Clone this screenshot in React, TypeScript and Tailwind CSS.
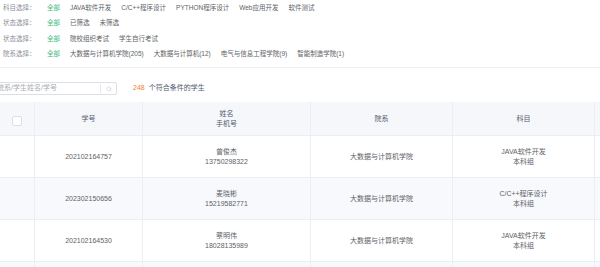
import { Search } from 'lucide-react';

const filters = [
    { label: '科目选择：', items: ['JAVA软件开发', 'C/C++程序设计', 'PYTHON程序设计', 'Web应用开发', '软件测试'] },
    { label: '状态选择：', items: ['已筛选', '未筛选'] },
    { label: '状态选择：', items: ['院校组织考试', '学生自行考试'] },
    { label: '院系选择：', items: ['大数据与计算机学院(205)', '大数据与计算机(12)', '电气与信息工程学院(9)', '智能制造学院(1)'] },
];

const rows = [
    { id: '202102164757', name: '曾俊杰', phone: '13750298322', dept: '大数据与计算机学院', subject: 'JAVA软件开发', group: '本科组' },
    { id: '202302150656', name: '麦晓彬', phone: '15219582771', dept: '大数据与计算机学院', subject: 'C/C++程序设计', group: '本科组' },
    { id: '202102164530', name: '蔡明伟', phone: '18028135989', dept: '大数据与计算机学院', subject: 'JAVA软件开发', group: '本科组' },
];

const cols = 'grid grid-cols-[35px_108px_168px_142px_142px_140px]';
const cell = 'flex flex-col items-center justify-center border-r border-b border-[#ebeef5] text-center';

export default function App() {
    return (
        <div className="w-[600px] h-[267px] overflow-hidden bg-white font-['Liberation_Sans','Noto_Sans_CJK_SC',sans-serif] text-[7px] text-[#606266]">
            {/* Filters */}
            <div className="pl-[3px] pb-[5px] border-b border-[#f0f0f0] text-[6.5px]">
                {filters.map((f, i) => (
                    <div key={i} className="h-[15.5px] flex items-center whitespace-nowrap">
                        <span className="w-[44px] text-[#8a8f99]">{f.label}</span>
                        <div className="flex gap-[10px]">
                            <span className="text-[#3cb97e]">全部</span>
                            {f.items.map((it) => (
                                <span key={it}>{it}</span>
                            ))}
                        </div>
                    </div>
                ))}
            </div>

            {/* Search */}
            <div className="mt-[14px] flex items-center h-[13px]">
                <div className="ml-[-30px] w-[147px] h-[13px] flex items-center border border-[#dcdfe6] rounded-[2px]">
                    <span className="flex-1 pl-[26px] text-[#a8abb2] whitespace-nowrap overflow-hidden">院系/学生姓名/学号</span>
                    <div className="w-px h-[9px] bg-[#e4e7ed]" />
                    <div className="w-[15px] flex items-center justify-center">
                        <Search className="w-[6px] h-[6px] text-[#c0c4cc]" strokeWidth={2} />
                    </div>
                </div>
                <span className="ml-[16px] text-[#f57a35]">248</span>
                <span className="ml-[4px] text-[#515a6e]">个符合条件的学生</span>
            </div>

            {/* Table */}
            <div className="mt-[7px] w-[735px]">
                <div className={`${cols} h-[34px] bg-[#f5f7fa] text-[#515a6e] leading-[10px]`}>
                    <div className={cell}>
                        <div className="w-[10px] h-[10px] mt-[4px] border border-[#dcdfe6] rounded-[2px] bg-white" />
                    </div>
                    <div className={cell}>学号</div>
                    <div className={cell}>
                        <span>姓名</span>
                        <span>手机号</span>
                    </div>
                    <div className={cell}>院系</div>
                    <div className={cell}>科目</div>
                    <div className={cell} />
                </div>
                {rows.map((r, i) => (
                    <div key={r.id} className={`${cols} h-[42px] leading-[9.5px] ${i % 2 === 1 ? 'bg-[#f8f9fc]' : 'bg-white'}`}>
                        <div className={cell} />
                        <div className={cell}>{r.id}</div>
                        <div className={cell}>
                            <span>{r.name}</span>
                            <span>{r.phone}</span>
                        </div>
                        <div className={cell}>{r.dept}</div>
                        <div className={cell}>
                            <span>{r.subject}</span>
                            <span>{r.group}</span>
                        </div>
                        <div className={cell} />
                    </div>
                ))}
                <div className={`${cols} h-[42px] bg-[#f8f9fc]`}>
                    <div className={cell} />
                    <div className={cell} />
                    <div className={cell} />
                    <div className={cell} />
                    <div className={cell} />
                    <div className={cell} />
                </div>
            </div>
        </div>
    );
}
